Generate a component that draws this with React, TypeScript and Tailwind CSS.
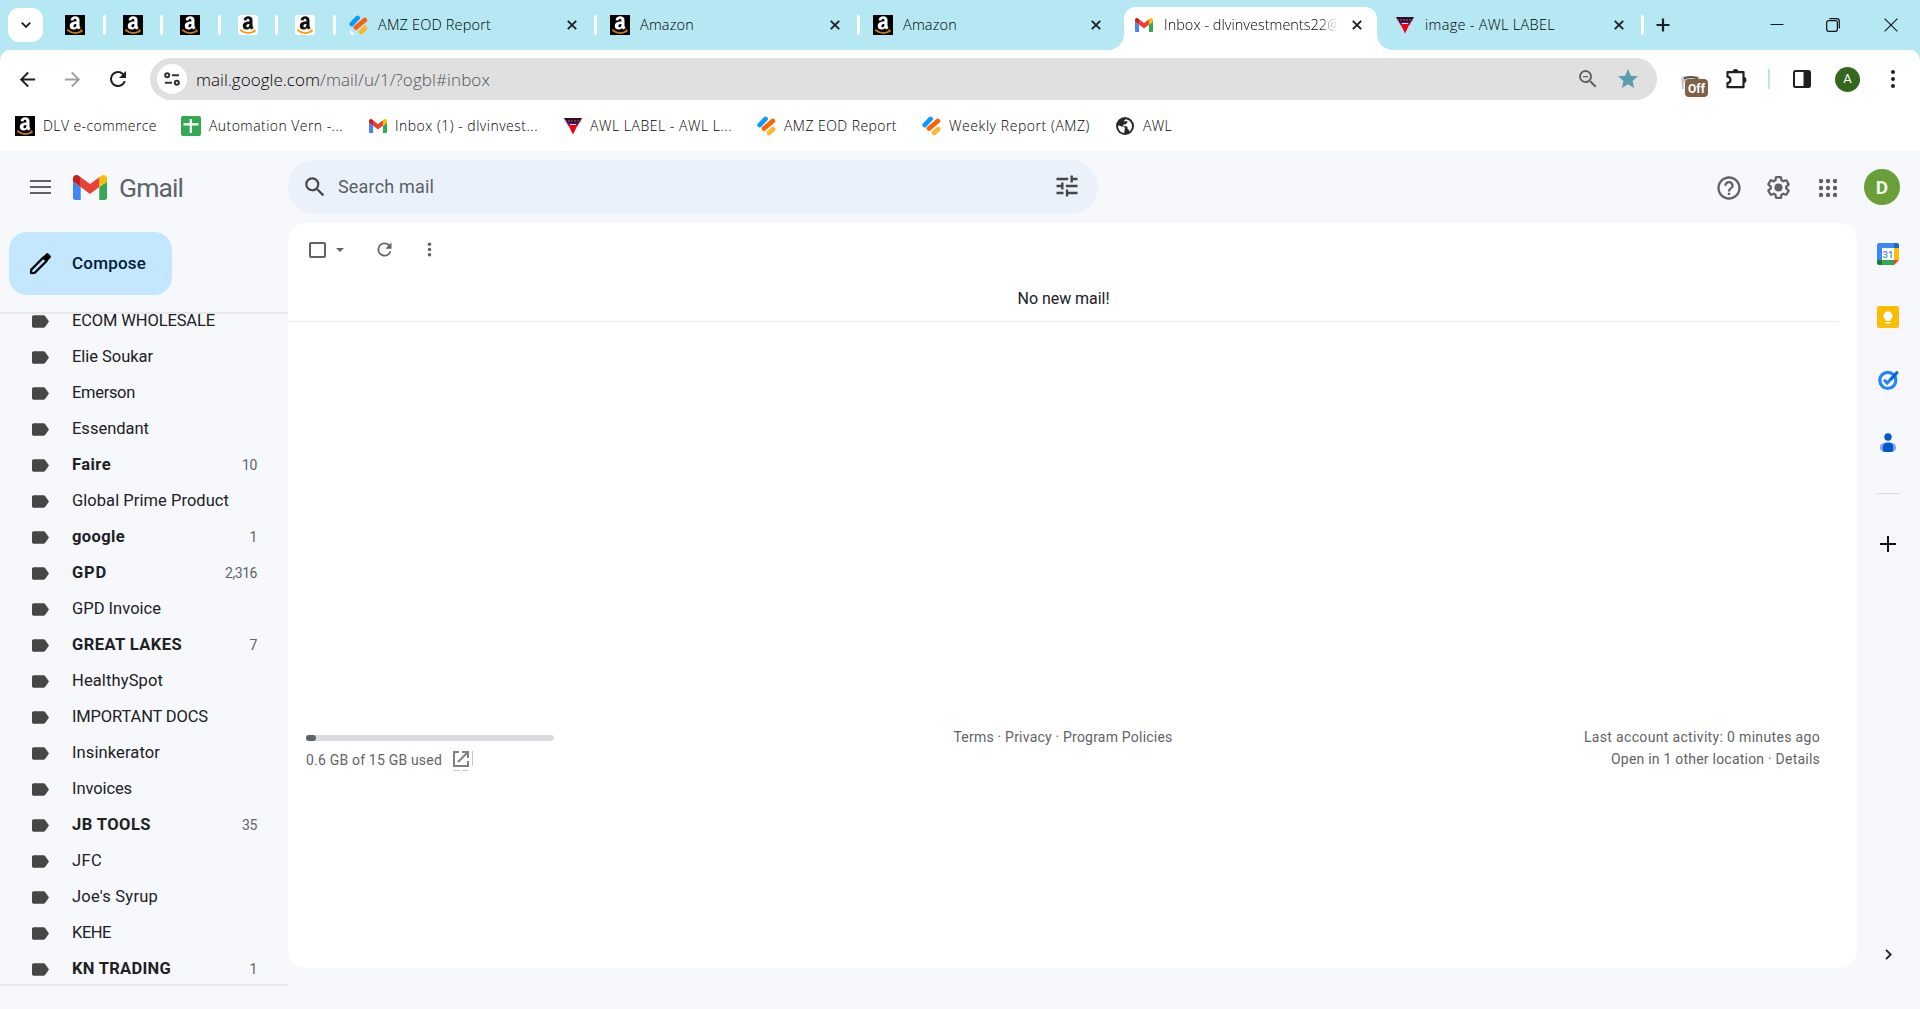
import { useLayoutEffect, useRef, useState } from "react";
import type { ReactNode } from "react";

const ui = "font-['Open_Sans',sans-serif] font-light text-[14.500px] text-black";
const pt = "font-[Roboto,sans-serif]";

/* One line of text tracked so that it fills a given width. */
function T({ w, c, children }: { w: number; c: string; children: string }) {
  const ref = useRef<HTMLSpanElement>(null);
  const [ls, setLs] = useState(0);
  useLayoutEffect(() => {
    const natural = ref.current!.getBoundingClientRect().width;
    setLs((w - natural) / children.length);
  }, [w, children]);
  return (
    <span ref={ref} className={`inline-block shrink-0 whitespace-pre ${c}`} style={{ letterSpacing: `${ls}px` }}>
      {children}
    </span>
  );
}

function Amazon({ dark = true }: { dark?: boolean }) {
  return (
    <svg viewBox="0 0 20 20" className="size-5 shrink-0">
      <rect width="20" height="20" rx={dark ? 0 : 3} fill={dark ? "#000" : "#fff"} />
      <path
        d="M5.600 5.200C6 2.400 7.700 1.300 10.200 1.300c2.700 0 4.300 1.300 4.300 3.800v5.200c0 1.100.4 1.700 1.100 2.400l-2 1.900c-.8-.6-1.200-1-1.600-1.700-.9 1.100-2.100 1.700-3.600 1.700-2.200 0-3.600-1.400-3.600-3.600 0-3.200 2.400-4.200 6.600-4.400 0-1.900-.2-2.800-1.500-2.800-.8 0-1.300.5-1.400 1.700zM11.400 8.900c-2 0-3 .6-3 1.900 0 .9.4 1.500 1.100 1.500 1.300 0 1.900-1.300 1.900-3.400z"
        fill={dark ? "#fff" : "#111"}
      />
      <path d="M2.800 15.300c4.200 3.300 9.400 3.400 13.600.9" fill="none" stroke={dark ? "#c77d1d" : "#f90"} strokeWidth="1.800" strokeLinecap="round" />
      <path d="M14.900 15l2.300-.1-.5 2.300" fill="none" stroke={dark ? "#c77d1d" : "#f90"} strokeWidth="1" />
    </svg>
  );
}
function Jotform({ corner = false }: { corner?: boolean }) {
  return (
    <svg viewBox="0 0 20 20" className="h-5 w-[19px] shrink-0" fill="none" strokeLinecap="round" strokeWidth="5">
      <path d="M2.800 9L9 2.600" stroke="#0a9bff" />
      <path d="M7.400 12.600L16.600 4.800" stroke="#ff6100" />
      <path d="M12.800 17.200L16.800 13.400" stroke="#ffb629" />
      {corner && <path d="M1 15.200v4.800h5z" fill="#fff" stroke="none" />}
    </svg>
  );
}
function GmailM({ c }: { c: string }) {
  return (
    <svg viewBox="52 42 88 66" className={`shrink-0 ${c}`} preserveAspectRatio="none">
      <path fill="#4285f4" d="M58 108h14V74L52 59v43c0 3.320 2.690 6 6 6" />
      <path fill="#34a853" d="M120 108h14c3.320 0 6-2.690 6-6V59l-20 15" />
      <path fill="#fbbc04" d="M120 48v26l20-15v-8c0-7.420-8.470-11.650-14.400-7.200" />
      <path fill="#ea4335" d="M72 74V48l24 18 24-18v26L96 92" />
      <path fill="#c5221f" d="M52 51v8l20 15V48l-5.600-4.200c-5.940-4.450-14.400-.22-14.400 7.200" />
    </svg>
  );
}
function Awl() {
  return (
    <svg viewBox="0 0 20 18" className="h-[18px] w-5 shrink-0">
      <path d="M0 1h20L10 17z" fill="#d7a5c4" opacity=".6" />
      <path d="M1 1h18l-3 5H4z" fill="#2a0d33" />
      <path d="M2 4h16" stroke="#d9622d" strokeDasharray="2 1" />
      <path d="M4 6h12l-1.500 3h-9z" fill="#2b2a9c" />
      <path d="M5 7h10L10 17.500z" fill="#f3000e" />
      <path d="M7 7.500h6" stroke="#fbd3dc" />
    </svg>
  );
}
function I({ d, s = 24, c = "", box = "0 0 24 24" }: { d: string; s?: number; c?: string; box?: string }) {
  return (
    <svg viewBox={box} width={s} height={s} fill="currentColor" className={`shrink-0 ${c}`}>
      <path d={d} />
    </svg>
  );
}
function X() {
  return (
    <svg viewBox="0 0 10 10" className="size-[10px] shrink-0" stroke="#1f2024" strokeWidth="1.900">
      <path d="M.8.8l8.400 8.400M9.200.8L.8 9.200" />
    </svg>
  );
}
const Sep = ({ c = "" }: { c?: string }) => <div className={`h-5 w-[3px] shrink-0 rounded-full bg-white ${c}`} />;

const REFRESH = "M17.65 6.35A7.958 7.958 0 0 0 12 4a8 8 0 1 0 7.730 10h-2.080A6 6 0 1 1 12 6c1.660 0 3.140.69 4.220 1.780L13 11h7V4z";
const DOTS = "M12 8c1.100 0 2-.9 2-2s-.9-2-2-2-2 .9-2 2 .9 2 2 2m0 2c-1.100 0-2 .9-2 2s.9 2 2 2 2-.9 2-2-.9-2-2-2m0 6c-1.100 0-2 .9-2 2s.9 2 2 2 2-.9 2-2-.9-2-2-2";
const GEAR =
  "M13.850 22.250h-3.700c-.74 0-1.360-.54-1.450-1.270l-.27-1.890c-.27-.14-.53-.29-.79-.46l-1.800.72c-.7.26-1.470-.03-1.810-.65L2.200 15.530c-.35-.66-.2-1.440.36-1.880l1.530-1.190c-.01-.15-.02-.3-.02-.46 0-.15.01-.31.02-.46l-1.520-1.190c-.59-.45-.74-1.260-.37-1.880l1.850-3.190c.34-.62 1.110-.9 1.790-.63l1.810.73c.26-.17.52-.32.78-.46l.27-1.910c.09-.7.71-1.250 1.440-1.250h3.700c.74 0 1.360.54 1.450 1.270l.27 1.890c.27.14.53.29.79.46l1.800-.72c.71-.26 1.480.03 1.820.65l1.840 3.180c.36.66.2 1.440-.36 1.880l-1.520 1.190c.01.15.02.3.02.46s-.01.31-.02.46l1.520 1.190c.56.45.72 1.230.37 1.860l-1.860 3.220c-.34.62-1.110.9-1.800.63l-1.800-.72c-.26.17-.52.32-.78.46l-.27 1.910c-.1.68-.72 1.220-1.460 1.220zm-3.230-2h2.760l.37-2.550.53-.22c.44-.18.88-.44 1.340-.78l.45-.34 2.380.96 1.380-2.400-2.030-1.580.07-.56c.03-.26.06-.51.06-.78s-.03-.53-.06-.78l-.07-.56 2.030-1.580-1.390-2.400-2.390.96-.45-.35c-.42-.32-.87-.58-1.330-.77l-.52-.22-.37-2.550h-2.760l-.37 2.550-.53.210c-.44.19-.88.44-1.340.79l-.45.33-2.380-.95-1.390 2.390 2.030 1.580-.07.56a7 7 0 0 0-.06.79c0 .26.02.53.06.78l.07.56-2.030 1.580 1.380 2.400 2.390-.96.45.35c.43.33.86.58 1.330.77l.53.22z";

const items: [string, string?][] = [
  ["ECOM WHOLESALE"], ["Elie Soukar"], ["Emerson"], ["Essendant"], ["Faire", "10"], ["Global Prime Product"],
  ["google", "1"], ["GPD", "2,316"], ["GPD Invoice"], ["GREAT LAKES", "7"], ["HealthySpot"], ["IMPORTANT DOCS"],
  ["Insinkerator"], ["Invoices"], ["JB TOOLS", "35"], ["JFC"], ["Joe's Syrup"], ["KEHE"], ["KN TRADING", "1"],
];
const widths = [143, 81, 63, 77, 39, 157, 53, 35, 89, 110, 91, 136, 88, 60, 79, 30, 86, 39, 99];

function BookMark({ icon, w, ml, gap, children }: { icon: ReactNode; w: number; ml: string; gap: string; children: string }) {
  return (
    <div className={`flex items-center ${ml} ${gap}`}>
      {icon}
      <T w={w} c="-mt-[2px] text-[14px]">{children}</T>
    </div>
  );
}

function TabStrip() {
  return (
    <div className="flex h-[50px] w-full items-center bg-[#b5e8f3]">
      <div className="ml-2 flex h-[34px] w-[35px] shrink-0 items-center justify-center rounded-[11px] bg-white">
        <svg viewBox="0 0 10 6" className="h-[6px] w-[10px]" fill="none" stroke="#1f2024" strokeWidth="1.900"><path d="M.8.7L5 4.900 9.200.7" /></svg>
      </div>
      <div className="ml-[22px] flex items-center">
        <Amazon /><Sep c="ml-[18px] mr-[17px]" />
        <Amazon /><Sep c="mx-[17px]" />
        <Amazon /><Sep c="ml-[18px] mr-[17px]" />
        <Amazon dark={false} /><Sep c="mx-[17px]" />
        <Amazon dark={false} /><Sep c="ml-[18px] mr-[13px]" />
      </div>
      <div className="flex w-[248px] shrink-0 items-center">
        <Jotform corner />
        <T w={113} c="ml-[10px]">AMZ EOD Report</T>
        <span className="ml-auto mr-[17px]"><X /></span>
        <Sep />
      </div>
      <div className="ml-[13px] flex w-[250px] shrink-0 items-center">
        <Amazon /><T w={54} c="ml-[10px]">Amazon</T>
        <span className="ml-auto mr-[17px]"><X /></span>
        <Sep />
      </div>
      <div className="ml-[13px] flex w-[228px] shrink-0 items-center">
        <Amazon /><T w={54} c="ml-[10px]">Amazon</T>
        <span className="ml-auto"><X /></span>
      </div>
      <svg className="ml-[7px] h-[43px] w-4 shrink-0 self-end" viewBox="0 0 16 43"><path d="M16 27v16H0c9 0 16-7 16-16z" fill="#fff" /></svg>
      <div className="flex h-[43px] w-[253px] shrink-0 items-center self-end rounded-t-[12px] bg-white pb-2 pl-[11px]">
        <GmailM c="h-[14px] w-[18px]" />
        <div className="ml-[11px] w-[176px] overflow-hidden [mask-image:linear-gradient(90deg,#000_88%,transparent_99%)]">
          <T w={176} c="">Inbox - dlvinvestments22@</T>
        </div>
        <span className="ml-3"><X /></span>
      </div>
      <svg className="h-[43px] w-4 shrink-0 self-end" viewBox="0 0 16 43"><path d="M0 27v16h16C7 43 0 36 0 27z" fill="#fff" /></svg>
      <div className="ml-[2px] flex shrink-0 items-center">
        <Awl /><T w={130} c="ml-[10px]">image - AWL LABEL</T>
        <span className="ml-[59px]"><X /></span>
        <Sep c="ml-[17px]" />
        <svg viewBox="0 0 14 14" className="ml-3 size-[14px]" stroke="#1f2024" strokeWidth="2.200"><path d="M7 .5v13M.5 7h13" /></svg>
      </div>
      <svg viewBox="0 0 14 14" className="ml-[100px] size-[14px] shrink-0" stroke="#111" strokeWidth="1"><path d="M.5 6.500h13" /></svg>
      <svg viewBox="0 0 14 14" className="ml-[42px] size-[14px] shrink-0" stroke="#111" strokeWidth="1.200" fill="none"><rect x=".7" y="2.600" width="10.700" height="10.700" rx="2" /><path d="M3.400.7h7.200a2.700 2.700 0 0 1 2.700 2.700v7.200" /></svg>
      <svg viewBox="0 0 14 14" className="ml-[44px] size-[14px] shrink-0" stroke="#111" strokeWidth="1.100"><path d="M.6.6l12.800 12.800M13.400.6L.6 13.400" /></svg>
    </div>
  );
}

function Toolbar() {
  return (
    <div className="flex h-[58px] items-center">
      <I d="M20 11H7.830l5.590-5.590L12 4l-8 8 8 8 1.410-1.410L7.830 13H20z" s={23} c="ml-[16px] text-[#1f2024]" />
      <I d="M12 4l-1.410 1.410L16.170 11H4v2h12.170l-5.580 5.590L12 20l8-8z" s={23} c="ml-[22px] text-[#a0a0a0]" />
      <I d={REFRESH} s={24} c="ml-[22px] text-[#1f2024]" />
      <div className="ml-[20px] flex h-[42px] w-[1507px] shrink-0 items-center rounded-full bg-[#e0e0e0] pl-[7px]">
        <div className="flex size-[30px] items-center justify-center rounded-full bg-white">
          <svg viewBox="0 0 16 14" className="h-[14px] w-4" fill="none" stroke="#303236" strokeWidth="2">
            <circle cx="3.200" cy="3.200" r="2" /><path d="M8 3.200h7M1 10.800h7" /><circle cx="12.800" cy="10.800" r="2" />
          </svg>
        </div>
        <T w={124} c="ml-[9px] mt-px text-[17px]">mail.google.com</T>
        <T w={170} c="mt-px text-[17px] text-[#4f5358]">/mail/u/1/?ogbl#inbox</T>
        <I d="M15.500 14h-.79l-.28-.27A6.470 6.470 0 0 0 16 9.500 6.500 6.500 0 1 0 9.500 16c1.610 0 3.090-.59 4.230-1.570l.27.28v.79l5 4.990L20.490 19zm-6 0C7.010 14 5 11.990 5 9.500S7.010 5 9.500 5 14 7.010 14 9.500 11.990 14 9.500 14M7 9h5v1.200H7z" s={24} c="ml-auto text-[#5f6368]" />
        <I d="M12 17.270L18.180 21l-1.640-7.030L22 9.240l-7.190-.61L12 2 9.190 8.630 2 9.240l5.460 4.730L5.820 21z" s={24} c="ml-[16px] mr-[17px] text-[#5a9eae]" />
      </div>
      <div className="relative ml-[23px] h-[26px] w-7 shrink-0">
        <svg viewBox="0 0 28 26" className="absolute left-0 top-[7px] h-[26px] w-7"><path d="M1 5l3-2h13l3 2-2 4H4v7H2z" fill="#c9c9c9" /><path d="M4 5.500c4-2 9-2 14 0" stroke="#555" strokeWidth="2" fill="none" /></svg>
        <div className={`${pt} absolute left-[5px] top-[13px] flex h-[18px] w-[23px] items-center justify-center rounded-[4px] bg-[#7f6245] pt-[2px] text-[12px] font-bold text-white`}>Off</div>
      </div>
      <svg viewBox="0 0 22 22" className="ml-[17px] size-[22px] shrink-0">
        <path d="M2.500 4.200h16v15h-16v-4.200c2.600-.5 3-1.800 3-3.100s-.6-2.700-3-3.200z" fill="none" stroke="#1f2024" strokeWidth="2.200" strokeLinejoin="round" />
        <path d="M7.600 4a2.900 2.900 0 0 1 5.800 0zM18.600 9a2.900 2.900 0 0 1 0 5.800z" fill="#1f2024" />
      </svg>
      <div className="ml-[21px] h-5 w-[2px] shrink-0 bg-[#b5e8f3]" />
      <svg viewBox="0 0 18 18" className="ml-[23px] size-[18px] shrink-0"><rect x="1" y="1" width="16" height="16" rx="1.500" fill="#fff" stroke="#1f2024" strokeWidth="2" /><path d="M10.500 1H17v16h-6.500z" fill="#1f2024" /></svg>
      <div className={`${pt} ml-6 flex size-[25px] shrink-0 items-center justify-center rounded-full bg-[#33691e] text-[13px] font-normal text-white`}>A</div>
      <svg viewBox="0 0 4 18" className="ml-[31px] h-[18px] w-1 shrink-0" fill="#1f2024"><circle cx="2" cy="2" r="2" /><circle cx="2" cy="9" r="2" /><circle cx="2" cy="16" r="2" /></svg>
    </div>
  );
}

function Bookmarks() {
  return (
    <div className="flex h-[43px] items-center pb-[7px]">
      <BookMark ml="ml-[15px]" gap="gap-2" w={114} icon={<Amazon />}>DLV e-commerce</BookMark>
      <BookMark ml="ml-[24px]" gap="gap-2" w={134} icon={
        <svg viewBox="0 0 20 20" className="size-5"><rect width="20" height="20" rx="2" fill="#34a853" /><path d="M9.800 3v14M2.500 8.300h15" stroke="#fff" strokeWidth="2.200" /></svg>
      }>Automation Vern -...</BookMark>
      <BookMark ml="ml-[26px]" gap="gap-2" w={143} icon={<GmailM c="h-[14px] w-[18px]" />}>Inbox (1) - dlvinvest...</BookMark>
      <BookMark ml="ml-[25px]" gap="gap-[7px]" w={142} icon={<Awl />}>AWL LABEL - AWL L...</BookMark>
      <BookMark ml="ml-[25px]" gap="gap-2" w={113} icon={<Jotform />}>AMZ EOD Report</BookMark>
      <BookMark ml="ml-[25px]" gap="gap-2" w={141} icon={<Jotform />}>Weekly Report (AMZ)</BookMark>
      <BookMark ml="ml-[26px]" gap="gap-[9px]" w={29} icon={
        <svg viewBox="0 0 18 18" className="size-[18px]"><circle cx="9" cy="9" r="9" fill="#26282b" /><path d="M2 8.500c2 .2 3 1 5 1.200 1.500.2 2 1 1.800 2.300l-.6 4C4.800 15.800 2 13 2 8.500zM7 4.200c1-.3 2-1 2.500-2C13 2.400 16 5.500 16 9c0 2.500-1.200 4.300-2.700 5.400-.3-1.500-.6-2.300-1.700-2.500 0-2-.2-2.600-1.600-2.600H7.200V7.600h2c1.200 0 .8-1.800 2.200-1.800V4.200z" fill="#fff" /></svg>
      }>AWL</BookMark>
    </div>
  );
}

function Header() {
  return (
    <header className="flex h-[72px] items-center">
      <svg viewBox="0 0 21 14" className="ml-[30px] h-[14px] w-[21px] shrink-0" stroke="#5f6368" strokeWidth="2"><path d="M0 1h21M0 7h21M0 13h21" /></svg>
      <GmailM c="ml-[22px] h-[25px] w-[34px]" />
      <T w={64} c={`${pt} ml-[12px] mt-[2px] text-[26.500px] leading-[30px] text-[#5f6368]`}>Gmail</T>
      <div className="ml-[105px] flex h-[54px] w-[810px] shrink-0 items-center rounded-full bg-[#eaf1fb]">
        <I d="M15.500 14h-.79l-.28-.27A6.470 6.470 0 0 0 16 9.500 6.500 6.500 0 1 0 9.500 16c1.610 0 3.090-.59 4.230-1.570l.27.28v.79l5 4.990L20.490 19zm-6 0C7.010 14 5 11.990 5 9.500S7.010 5 9.500 5 14 7.010 14 9.500 11.990 14 9.500 14" s={26} c="ml-[14px] text-[#444746]" />
        <T w={96} c={`${pt} -mt-[2px] ml-[10px] text-[18px] text-[#5c5f62]`}>Search mail</T>
        <I d="M3 17v2h6v-2zM3 5v2h10V5zm10 16v-2h8v-2h-8v-2h-2v6zM7 9v2H3v2h4v2h2V9zm14 4v-2H11v2zm-6-4h2V7h4V5h-4V3h-2z" s={28} c="-mt-[3px] ml-auto mr-[17px] text-[#444746]" />
      </div>
      <I d="M11 18h2v-2h-2zm1-16C6.480 2 2 6.480 2 12s4.480 10 10 10 10-4.480 10-10S17.520 2 12 2m0 18c-4.410 0-8-3.590-8-8s3.590-8 8-8 8 3.590 8 8-3.590 8-8 8m0-14c-2.210 0-4 1.790-4 4h2c0-1.100.9-2 2-2s2 .9 2 2c0 2-3 1.750-3 5h2c0-2.250 3-2.500 3-5 0-2.210-1.790-4-4-4" s={28} c="ml-auto mt-px text-[#5f6368]" />
      <svg viewBox="0 0 24 24" className="ml-[22px] mt-px size-[27px] shrink-0 text-[#5f6368]" fill="currentColor"><path d={GEAR} /><circle cx="12" cy="12" r="3.600" /></svg>
      <svg viewBox="0 0 18 18" className="ml-[27px] mt-px size-[18px] shrink-0" fill="#5f6368">
        {[2, 9, 16].map((y) => [2, 9, 16].map((x) => <circle key={`${x}-${y}`} cx={x} cy={y} r="2.200" />))}
      </svg>
      <div className={`${pt} ml-[27px] mr-5 flex size-9 shrink-0 items-center justify-center rounded-full bg-[#689f38] pt-[2px] text-[19px] font-bold text-[#f1f8e9]`}>D</div>
    </header>
  );
}

function Sidebar() {
  return (
    <aside className="flex w-[288px] shrink-0 flex-col">
      <div className="h-[89px] shrink-0">
        <button className="ml-[9px] mt-[9px] flex h-[63px] w-[163px] items-center rounded-[18px] bg-[#c2e7ff] pl-5">
          <svg viewBox="0 0 22 22" className="size-[23px] shrink-0"><path d="M2 20.200l.2-3.400L13.600 5.400l3.200 3.200L5.400 20z" fill="none" stroke="#0b0b0b" strokeWidth="2.200" strokeLinejoin="round" /><path d="M13 5l3.300-3.400c.7-.7 1.700-.7 2.400 0l1.700 1.700c.7.700.7 1.700 0 2.400L17 9z" fill="#000" /></svg>
          <T w={74} c={`${pt} ml-[20px] text-[17px] font-medium text-[#001d35]`}>Compose</T>
        </button>
      </div>
      <nav className="flex h-[674px] flex-col overflow-hidden border-b-2 border-t-2 border-[#e6e8ec]">
        <div className="-mt-[11px]">
          {items.map(([name, count], i) => (
            <div key={name} className="flex h-9 shrink-0 items-center pl-8 pr-[31px]">
              <I box="3 5 19 14" d="M17.630 5.840C17.270 5.330 16.670 5 16 5H5c-1.100 0-2 .9-2 2v10c0 1.100.9 2 2 2h11c.67 0 1.270-.33 1.630-.84L22 12z" s={17} c="text-[#444746]" />
              <T w={widths[i]} c={`${pt} ml-[23px] text-[16.500px] ${count ? "font-bold" : ""} text-[#202124]`}>{name}</T>
              {count && <T w={count.length > 2 ? 32 : count.length * 7.500} c={`${pt} ml-auto text-[14px] text-[#5f6368]`}>{count}</T>}
            </div>
          ))}
        </div>
      </nav>
    </aside>
  );
}

function Mailbox() {
  const foot = `${pt} text-[14px] text-[#5f6368]`;
  return (
    <main className="h-[745px] w-[1569px] shrink-0 rounded-[18px] bg-white">
      <div className="flex h-[54px] items-center pl-[21px] text-[#5f6368]">
        <div className="h-4 w-[17px] rounded-[2px] border-2 border-[#5f6368]" />
        <svg viewBox="0 0 8 4" className="ml-[10px] h-1 w-2"><path d="M0 0h8L4 4z" fill="#5f6368" /></svg>
        <I d={REFRESH} s={21} c="-mt-px ml-[30px]" />
        <I d={DOTS} s={21} c="-mt-px ml-[24px]" />
      </div>
      <div className="mr-[18px] flex h-[45px] items-center justify-center border-b border-[#ebedef]">
        <T w={92} c={`${pt} text-[16px] text-[#202124]`}>No new mail!</T>
      </div>
      <footer className="grid grid-cols-3 pl-[18px] pr-[37px] pt-[403px]">
        <div className="pt-[10px]">
          <div className="h-[6px] w-[248px] rounded-full bg-[#dadce0]"><div className="h-[6px] w-[10px] rounded-full bg-[#5f6368]" /></div>
          <div className="mt-2 flex h-5 items-center">
            <T w={136} c={`${foot} mt-[2px]`}>0.6 GB of 15 GB used</T>
            <svg viewBox="0 0 22 22" className="-mb-[4px] ml-[10px] size-[22px] shrink-0" fill="none" stroke="#7c8186" strokeWidth="2">
              <path d="M7 2H2v14h14v-5M10 2h6v6M15.500 2.500L6 12" />
              <path d="M20.500 1v15" stroke="#c4c6c8" strokeWidth="1" />
              <path d="M1 20.500h7M10 20.500h6" stroke="#c4c6c8" strokeWidth="1" />
            </svg>
          </div>
        </div>
        <div className="text-center leading-[22px]"><T w={219} c={foot}>Terms · Privacy · Program Policies</T></div>
        <div className="flex flex-col items-end pt-px leading-[22px]">
          <T w={236} c={foot}>Last account activity: 0 minutes ago</T>
          <T w={209} c={foot}>Open in 1 other location · Details</T>
        </div>
      </footer>
    </main>
  );
}

function SidePanel() {
  return (
    <aside className="flex w-[62px] flex-col items-center">
      <svg viewBox="0 0 22 22" className="mt-5 size-[22px]">
        <path d="M2 0h15v5H5v12H0V2a2 2 0 0 1 2-2z" fill="#4285f4" /><path d="M17 0h3a2 2 0 0 1 2 2v3h-5z" fill="#1967d2" />
        <path d="M17 5h5v12h-5z" fill="#fbbc04" /><path d="M5 17h12v5H5z" fill="#34a853" /><path d="M0 17h5v5H2a2 2 0 0 1-2-2z" fill="#188038" />
        <path d="M17 17h5l-5 5z" fill="#ea4335" /><path d="M5 5h12v12H5z" fill="#fff" />
        <text x="11" y="14.700" textAnchor="middle" fontFamily="Roboto" fontSize="9.500" fontWeight="500" fill="#4285f4">31</text>
      </svg>
      <svg viewBox="0 0 22 22" className="mt-[41px] size-[22px]"><rect width="22" height="22" rx="2" fill="#fbbc04" /><circle cx="11" cy="10" r="4.500" fill="#fff" /><path d="M8.700 12h4.600v3H8.700zM8.700 16h4.600v1.500H8.700z" fill="#fff" /></svg>
      <svg viewBox="0 0 22 22" className="mt-[41px] size-[22px]" fill="none"><circle cx="10.800" cy="11.400" r="8" stroke="#2684fc" strokeWidth="3.200" /><path d="M7 10.800l3.200 3.200 4.300-4.500" stroke="#2684fc" strokeWidth="3.200" /><path d="M14.500 9.500l5.300-5.700" stroke="#0066da" strokeWidth="3.200" strokeLinecap="round" /></svg>
      <svg viewBox="0 0 22 22" className="mt-[41px] size-[22px]"><rect x="3" y="11" width="16" height="9" rx="4.500" fill="#7c9ff8" /><circle cx="11" cy="5" r="3.700" fill="#0058d0" /><path d="M6 15a4.500 4.500 0 0 1 4.500-4.500h2A4 4 0 0 1 16 14.500v3.500a2 2 0 0 1-2 2H8a2 2 0 0 1-2-2z" fill="#0057cc" /></svg>
      <div className="mt-[39px] h-px w-[23px] bg-[#dadce0]" />
      <svg viewBox="0 0 16 16" className="mt-[42px] size-4" stroke="#111" strokeWidth="2"><path d="M8 0v16M0 8h16" /></svg>
      <svg viewBox="0 0 7 11" className="mt-[397px] h-[11px] w-[7px]" fill="none" stroke="#1f2024" strokeWidth="1.800"><path d="M1 .8l4.700 4.700L1 10.200" /></svg>
    </aside>
  );
}

export default function App() {
  return (
    <div className="h-[1009px] w-[1920px] overflow-hidden bg-[#f6f8fc]">
      <div className={`bg-[#b5e8f3] ${ui}`}>
        <TabStrip />
        <div className="rounded-t-[10px] bg-white">
          <Toolbar />
          <Bookmarks />
        </div>
      </div>
      <Header />
      <div className="flex">
        <Sidebar />
        <Mailbox />
        <SidePanel />
      </div>
    </div>
  );
}
